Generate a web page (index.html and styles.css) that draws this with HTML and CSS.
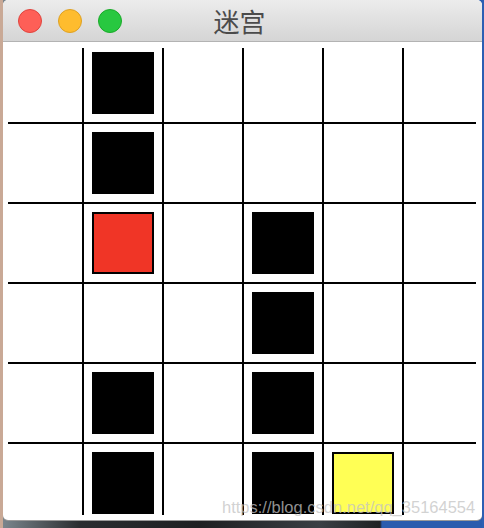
FILE: index.html
```html
<!DOCTYPE html>
<html lang="zh">
<head>
<meta charset="utf-8">
<title>迷宫</title>
<link rel="stylesheet" href="styles.css">
</head>
<body>
<div class="window">
  <div class="titlebar">
    <div class="lights">
      <span class="light red"></span>
      <span class="light yellow"></span>
      <span class="light green"></span>
    </div>
    <div class="title">迷宫</div>
    <div></div>
  </div>
  <div class="content">
    <div class="board">
      <div class="cell"></div><div class="cell"><div class="block wall"></div></div><div class="cell"></div><div class="cell"></div><div class="cell"></div><div class="cell"></div>
      <div class="cell"></div><div class="cell"><div class="block wall"></div></div><div class="cell"></div><div class="cell"></div><div class="cell"></div><div class="cell"></div>
      <div class="cell"></div><div class="cell"><div class="block player"></div></div><div class="cell"></div><div class="cell"><div class="block wall"></div></div><div class="cell"></div><div class="cell"></div>
      <div class="cell"></div><div class="cell"></div><div class="cell"></div><div class="cell"><div class="block wall"></div></div><div class="cell"></div><div class="cell"></div>
      <div class="cell"></div><div class="cell"><div class="block wall"></div></div><div class="cell"></div><div class="cell"><div class="block wall"></div></div><div class="cell"></div><div class="cell"></div>
      <div class="cell"></div><div class="cell"><div class="block wall"></div></div><div class="cell"></div><div class="cell"><div class="block wall"></div></div><div class="cell"><div class="block goal"></div></div><div class="cell"></div>
    </div>
  </div>
  <div class="watermark">https://blog.csdn.net/qq_35164554</div>
</div>
</body>
</html>
```
FILE: styles.css
```css
html, body {
  margin: 0;
  padding: 0;
}
body {
  width: 484px;
  height: 528px;
  overflow: hidden;
  background:
    linear-gradient(to right, #c9a996 0 3px, transparent 3px 482px, #2c5fb3 482px),
    linear-gradient(to right, #7d8990 0, #2a2d30 80px, #1e2022 200px, #3a3f44 320px, #1f2124 380px, #2b5cae 382px);
  font-family: "Liberation Sans", Arial, sans-serif;
}
.window {
  position: relative;
  width: 479px;
  height: 520px;
  margin-left: 3px;
  background: #fff;
  border-radius: 5px;
  overflow: hidden;
  box-shadow: 0 1px 0 #9a9a9a;
}
.titlebar {
  height: 41px;
  border-bottom: 1px solid #b3b3b3;
  background: linear-gradient(to bottom, #ececec, #d5d5d5);
  display: grid;
  grid-template-columns: 1fr auto 1fr;
  align-items: center;
}
.lights {
  display: flex;
  gap: 16px;
  padding-left: 15px;
}
.light {
  width: 22px;
  height: 22px;
  border-radius: 50%;
  border: 1px solid;
}
.red { background: #fe5f57; border-color: #e0443e; }
.yellow { background: #febc2e; border-color: #dea123; }
.green { background: #28c840; border-color: #1aab29; }
.title {
  font-family: "Noto Sans CJK SC", "Noto Sans", sans-serif;
  font-size: 26px;
  line-height: 30px;
  color: #4b4b4b;
  padding-right: 6px;
}
.content {
  padding: 2px 0 0 1px;
}
.board {
  display: grid;
  grid-template-columns: repeat(6, 80px);
  grid-template-rows: repeat(6, 80px);
  width: 480px;
  height: 480px;
  background-image:
    linear-gradient(to right, transparent 78px, #000 78px 80px),
    linear-gradient(to bottom, transparent 78px, #000 78px 80px);
  background-size: 80px 467px, 468px 80px;
  background-position: 0 4px, 4px 0;
  background-repeat: repeat-x, repeat-y;
}
.cell {
  padding: 8px;
}
.block {
  width: 62px;
  height: 62px;
  box-sizing: border-box;
}
.wall {
  background: #000;
}
.player {
  background: #f03526;
  border: 2px solid #000;
}
.goal {
  background: #ffff55;
  border: 2px solid #000;
}
.watermark {
  position: absolute;
  left: 219px;
  top: 498px;
  font-size: 16.5px;
  line-height: 19px;
  color: rgba(195, 195, 195, 0.75);
  white-space: nowrap;
}
```
